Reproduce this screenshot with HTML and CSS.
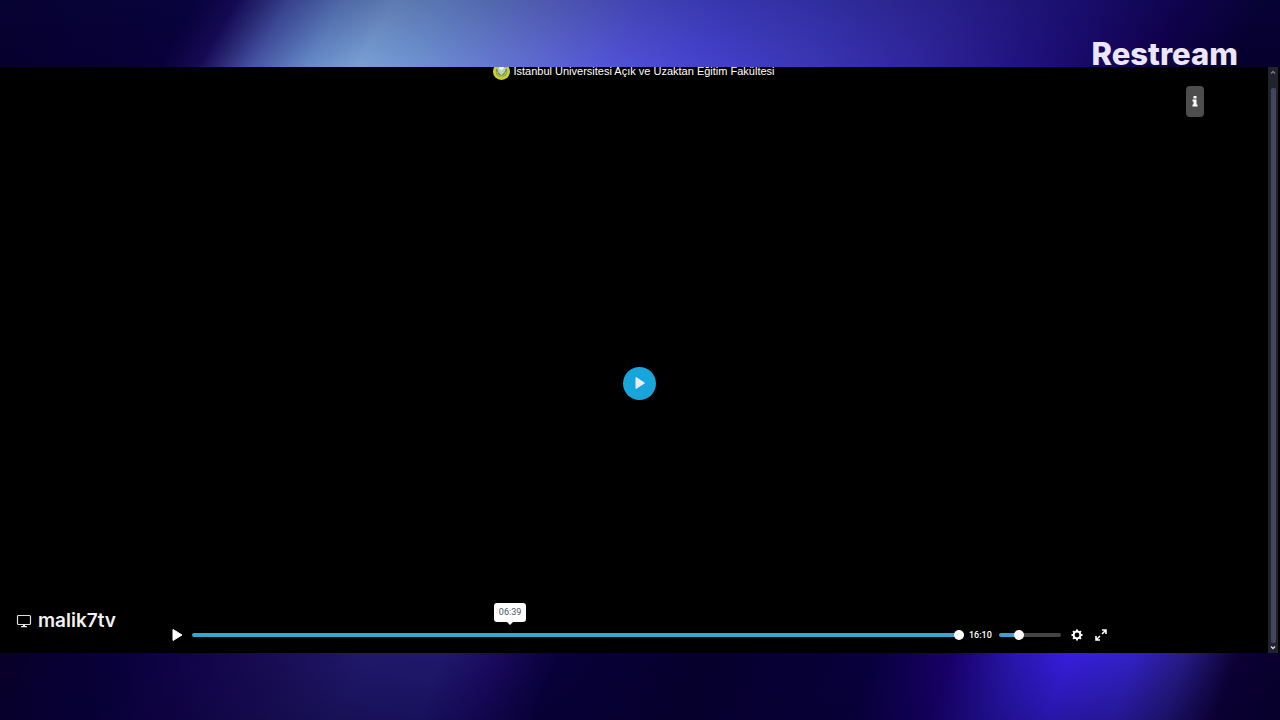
FILE: index.html
```html
<!DOCTYPE html>
<html lang="tr">
<head>
    <meta charset="UTF-8">
    <meta name="viewport" content="width=device-width, initial-scale=1.0">
    <title>malik7tv</title>
    <link rel="stylesheet" href="styles.css">
</head>
<body>
    <header class="top-band">
        <span class="brand">Restream</span>
    </header>

    <main class="stage">
        <section class="screen">
            <div class="title">
                <svg class="crest" viewBox="0 0 18 18" aria-hidden="true">
                    <circle cx="9" cy="9" r="9" fill="#c9cf35"/>
                    <circle cx="9" cy="9" r="6" fill="#738a38"/>
                    <path d="M4 5h10l-2 5-3 3-3-3z" fill="#b9d3c8"/>
                    <path d="M6 5l3 3 3-3v-2H6z" fill="#edf5ef"/>
                    <path d="M4 9q1 5 5 5t5-5" fill="none" stroke="#e5df4c"/>
                </svg>
                <span>İstanbul Üniversitesi Açık ve Uzaktan Eğitim Fakültesi</span>
            </div>

            <div class="tools">
                <button class="info" type="button" aria-label="Bilgi">
                    <svg viewBox="0 0 6 12" width="6" height="12" aria-hidden="true">
                        <path d="M1.500 0h3v2.500h-3zM.5 3.500h4V8.500H5.500V10.500H.5V8.500h1V5.500h-1z" fill="#fff"/>
                    </svg>
                </button>
            </div>

            <div class="video">
                <button class="big-play" type="button" aria-label="Oynat">
                    <svg viewBox="0 0 12 14" width="12" height="14" aria-hidden="true">
                        <path d="M3 1.500v11L11.500 7z" fill="#e8edfa" stroke="#e8edfa" stroke-linejoin="round"/>
                    </svg>
                </button>
            </div>

            <footer class="bottom">
                <div class="user">
                    <svg viewBox="0 0 16 14" width="16" height="14" aria-hidden="true">
                        <rect x="1.500" y="1.500" width="13" height="9" rx="1" fill="none" stroke="#ddd" stroke-width="1.200"/>
                        <path d="M7 10.500h2v1.500h2v1.200H5V12h2z" fill="#eee"/>
                    </svg>
                    <span>malik7tv</span>
                </div>

                <div class="controls">
                    <button class="icon play" type="button" aria-label="Oynat">
                        <svg viewBox="0 0 12 14" width="12" height="14" aria-hidden="true">
                            <path d="M2 1.500v11L11 7z" fill="#fff" stroke="#fff" stroke-linejoin="round"/>
                        </svg>
                    </button>
                    <div class="progress">
                        <input class="range seek" type="range" min="0" max="970" value="970" aria-label="Konum">
                        <span class="tooltip">06:39</span>
                    </div>
                    <span class="time">16:10</span>
                    <input class="range volume" type="range" min="0" max="100" value="28" aria-label="Ses">
                    <button class="icon settings" type="button" aria-label="Ayarlar">
                        <svg viewBox="0 0 12 12" width="12" height="12" aria-hidden="true">
                            <circle cx="6" cy="6" r="3.400" fill="none" stroke="#fff" stroke-width="2"/>
                            <path d="M6 .5v2M6 9.500v2M.5 6h2M9.500 6h2M2.100 2.100l1.400 1.400M8.500 8.500l1.400 1.400M2.100 9.900l1.400-1.400M8.500 3.500l1.400-1.400" stroke="#fff" stroke-width="2"/>
                        </svg>
                    </button>
                    <button class="icon" type="button" aria-label="Tam ekran">
                        <svg viewBox="0 0 12 12" width="12" height="12" aria-hidden="true">
                            <path d="M7 1h4v4M11 1L7 5M5 11H1V7M1 11l4-4" fill="none" stroke="#fff" stroke-width="1.600"/>
                        </svg>
                    </button>
                </div>
            </footer>
        </section>

        <div class="scrollbar" aria-hidden="true">
            <svg viewBox="0 0 10 10" width="10" height="10"><path d="M3 6.500l2-2 2 2" fill="none" stroke="#77777f" stroke-width="1.500"/></svg>
            <div class="thumb"></div>
            <svg viewBox="0 0 10 10" width="10" height="10"><path d="M3 3.500l2 2 2-2" fill="none" stroke="#d5d5e0" stroke-width="1.500"/></svg>
        </div>
    </main>

    <div class="bottom-band"></div>
</body>
</html>
```

FILE: styles.css
```css
* {
    box-sizing: border-box;
}

body {
    margin: 0;
    height: 100vh;
    display: flex;
    flex-direction: column;
    background: #06002c;
    color: #fff;
    font-family: Inter, "Liberation Sans", sans-serif;
}

button {
    border: 0;
    padding: 0;
    display: flex;
    align-items: center;
    justify-content: center;
    cursor: pointer;
}

svg {
    display: block;
    flex: none;
}

.top-band,
.bottom-band {
    flex: none;
    height: 67px;
}

.top-band {
    display: flex;
    align-items: flex-end;
    justify-content: flex-end;
    padding-right: 42px;
    background:
        linear-gradient(rgba(10, 10, 70, 0.25), rgba(10, 10, 70, 0)),
        linear-gradient(120deg, #06002a 0%, #08003a 15%, #180a55 18%, #4654a4 22%, #6488c6 26%, #7aa0d6 30%, #6f94d2 34%, #6474d0 41%, #5254d6 49%, #4744d0 55%, #3b36b6 64%, #30269e 72%, #1e0e78 82%, #10004c 90%, #06002e 96%);
}

.brand {
    font-size: 31px;
    font-weight: 800;
    line-height: 26px;
    color: #ebe6fa;
}

.bottom-band {
    background:
        linear-gradient(rgba(6, 0, 44, 0), rgba(6, 0, 44, 0.3)),
        linear-gradient(110deg, #080028 0%, #08003a 9%, #12044a 15%, #1a0e58 22%, #20186a 28%, #20186e 34%, #1a0a60 38%, #08003a 43%, #06002c 54%, #08003c 67%, #18006a 73%, #2a16b0 78%, #361edc 82%, #3222c4 87%, #261a84 91%, #0c0034 95%, #06002a 100%);
}

.stage {
    flex: 1;
    min-height: 0;
    display: flex;
    padding-right: 2px;
    background: #000;
    overflow: hidden;
}

.screen {
    flex: 1;
    position: relative;
    display: flex;
    flex-direction: column;
}

.title {
    display: flex;
    align-items: center;
    justify-content: center;
    gap: 3px;
    height: 18px;
    margin-top: -5px;
    font-family: "Liberation Sans", Arial, sans-serif;
    font-size: 11px;
    line-height: 18px;
}

.crest {
    width: 17px;
    height: 17px;
}

.tools {
    display: flex;
    justify-content: flex-end;
    padding: 6px 64px 0 0;
}

.info {
    width: 18px;
    height: 31px;
    border-radius: 4px;
    background: #4d4d4d;
}

.video {
    flex: 1;
    display: flex;
    align-items: center;
    justify-content: center;
    padding: 0 0 4px 10px;
}

.big-play {
    width: 33px;
    height: 33px;
    border-radius: 50%;
    background: #18a5dc;
}

/* controls lie over the video */
.bottom {
    position: absolute;
    left: 0;
    right: 0;
    bottom: 8px;
    display: flex;
    padding: 0 161px 0 16px;
}

.user {
    display: flex;
    align-items: center;
    gap: 6px;
    width: 155px;
    height: 20px;
    margin-bottom: 14px;
    font-size: 19px;
    font-weight: 600;
    line-height: 20px;
    color: #f2f2f2;
}

.controls {
    flex: 1;
    display: flex;
    align-items: center;
    align-self: flex-end;
    height: 20px;
}

.icon {
    background: none;
}

.play {
    margin-right: 9px;
}

.progress {
    flex: 1;
    position: relative;
    display: flex;
}

.range {
    appearance: none;
    width: 100%;
    height: 10px;
    margin: 0;
    background: none;
}

.range::-webkit-slider-runnable-track {
    height: 4px;
    border-radius: 2px;
    background: #35a5d5;
}

.range::-webkit-slider-thumb {
    appearance: none;
    width: 10px;
    height: 10px;
    margin-top: -3px;
    border-radius: 50%;
    background: #fff;
}

.volume {
    width: 62px;
    margin: 0 10px 0 8px;
}

.volume::-webkit-slider-runnable-track {
    background: linear-gradient(to right, #35a5d5 32%, #444 32%);
}

.time,
.tooltip {
    font-family: Roboto, sans-serif;
    font-size: 9px;
}

.time {
    width: 22px;
    margin-left: 5px;
    font-weight: 500;
}

.settings {
    margin-right: 12px;
}

.tooltip {
    position: absolute;
    left: 41.2%;
    bottom: 18px;
    transform: translateX(-50%);
    width: 32px;
    border-radius: 3px;
    background: #fff;
    color: #4a5464;
    line-height: 19px;
    text-align: center;
}

.tooltip::after {
    content: "";
    position: absolute;
    top: 100%;
    left: 50%;
    margin-left: -3px;
    border: 3px solid transparent;
    border-top-color: #fff;
    border-bottom: 0;
}

.scrollbar {
    width: 10px;
    display: flex;
    flex-direction: column;
    align-items: center;
    background: #22222c;
}

.thumb {
    flex: 1;
    width: 5px;
    margin-top: 11px;
    border-radius: 2px;
    background: #454560;
}
```
